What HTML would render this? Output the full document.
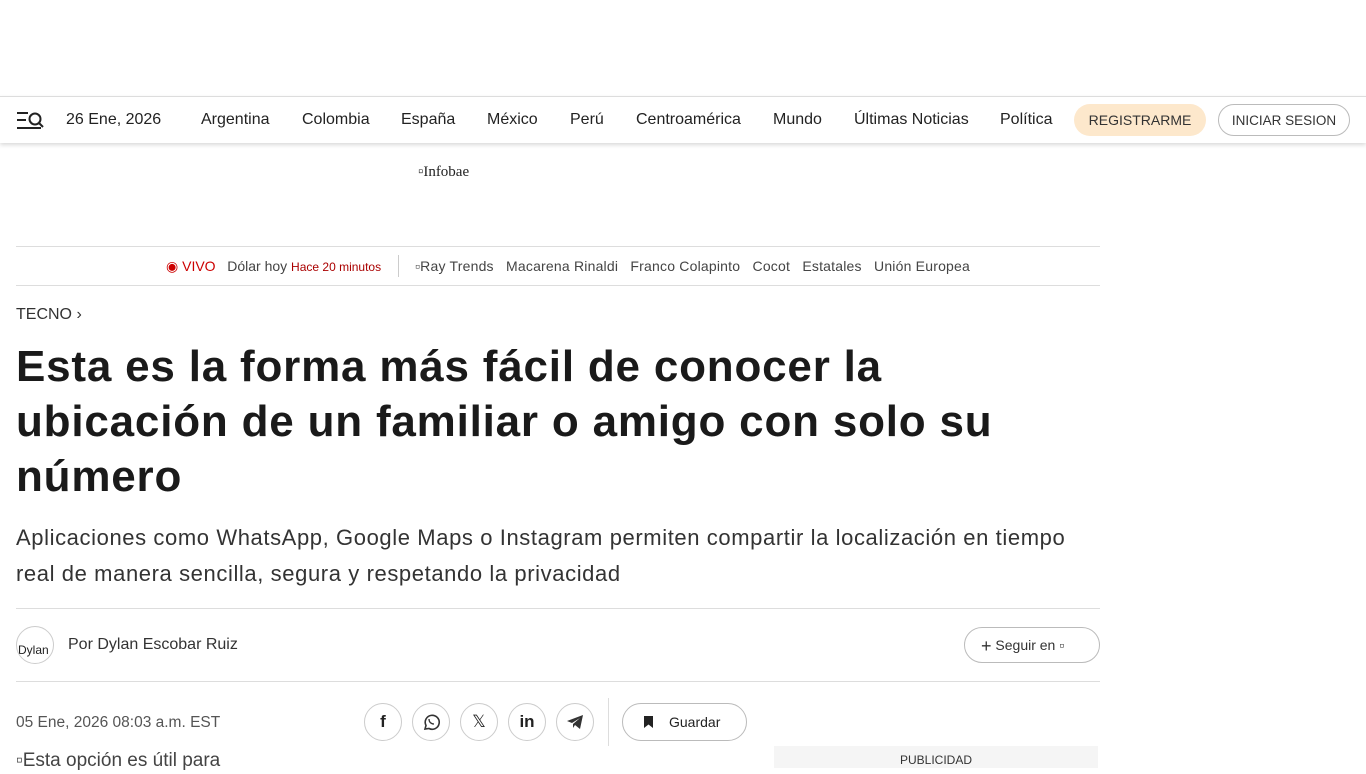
<!DOCTYPE html>
<html><head><meta charset="utf-8"><style>
*{margin:0;padding:0;box-sizing:border-box}
body{width:1366px;height:768px;overflow:hidden;background:#fff;font-family:"Liberation Sans",sans-serif;color:#222;position:relative}
.a{position:absolute;white-space:nowrap}
.nav{position:absolute;top:96px;left:0;width:1366px;height:47px;border-top:1px solid #ddd;box-shadow:0 2px 4px rgba(0,0,0,.15)}
.nav span{position:absolute;top:14px;font-size:16px;color:#222}
.btn{position:absolute;top:7px;height:32px;border-radius:16px;font-size:14px;line-height:32px;text-align:center;color:#333}
.hr{position:absolute;left:16px;width:1084px;height:1px;background:#ddd}
.circ{position:absolute;top:703px;width:38px;height:38px;border:1px solid #ccc;border-radius:50%;display:flex;align-items:center;justify-content:center}
</style></head><body>
<div class="nav">
<svg class="a" style="left:16px;top:14px" width="28" height="20" viewBox="0 0 28 20" fill="none" stroke="#222" stroke-width="2"><path d="M1 2h11M1 9h9M1 17h24"/><circle cx="19" cy="8" r="5.5"/><path d="M23 12l4 4"/></svg>
<span style="left:66px">26 Ene, 2026</span>
<span style="left:201px">Argentina</span><span style="left:302px">Colombia</span><span style="left:401px">España</span><span style="left:487px">México</span><span style="left:570px">Perú</span><span style="left:636px">Centroamérica</span><span style="left:773px">Mundo</span><span style="left:854px">Últimas Noticias</span><span style="left:1000px">Política</span>
<div class="btn" style="left:1074px;width:132px;background:#fde8cc">REGISTRARME</div>
<div class="btn" style="left:1218px;width:132px;border:1px solid #bbb;font-size:13.5px">INICIAR SESION</div>
</div>
<div class="a" style="left:418px;top:164px;font-family:'Liberation Serif',serif;font-size:15px">▫Infobae</div>
<div class="hr" style="top:246px"></div>
<div class="a" style="top:258px;left:166px;font-size:14px;color:#444"><span style="color:#c00">◉ VIVO</span>&nbsp;&nbsp; Dólar hoy <span style="color:#a00;font-size:12px">Hace 20 minutos</span></div>
<div class="a" style="left:398px;top:255px;width:1px;height:22px;background:#ccc"></div>
<div class="a" style="top:258px;left:415px;font-size:14px;color:#444;letter-spacing:0.2px">▫Ray Trends &nbsp; Macarena Rinaldi &nbsp; Franco Colapinto &nbsp; Cocot &nbsp; Estatales &nbsp; Unión Europea</div>
<div class="hr" style="top:285px"></div>
<div class="a" style="left:16px;top:306px;font-size:16px;color:#333">TECNO ›</div>
<div class="a" style="left:16px;top:339px;font-size:44px;font-weight:bold;line-height:55px;color:#1a1a1a;white-space:normal;width:1010px;letter-spacing:0.8px">Esta es la forma más fácil de conocer la ubicación de un familiar o amigo con solo su número</div>
<div class="a" style="left:16px;top:520px;font-size:22px;line-height:36px;color:#333;white-space:normal;width:1086px;letter-spacing:0.6px">Aplicaciones como WhatsApp, Google Maps o Instagram permiten compartir la localización en tiempo real de manera sencilla, segura y respetando la privacidad</div>
<div class="hr" style="top:608px"></div>
<div class="a" style="left:16px;top:626px;width:38px;height:38px;border:1px solid #ccc;border-radius:50%;font-size:12px;overflow:hidden;padding:16px 0 0 1px">Dylan</div>
<div class="a" style="left:68px;top:636px;font-size:16px;color:#333">Por Dylan Escobar Ruiz</div>
<div class="a" style="left:964px;top:627px;width:136px;height:36px;border:1px solid #bbb;border-radius:18px;font-size:14px;line-height:34px;padding-left:16px;color:#333"><span style="font-size:18px;vertical-align:-2px">+</span> Seguir en ▫</div>
<div class="hr" style="top:681px"></div>
<div class="a" style="left:16px;top:714px;font-size:15.5px;color:#555">05 Ene, 2026 08:03 a.m. EST</div>
<div class="circ" style="left:364px;font-weight:bold;font-size:17px">f</div>
<div class="circ" style="left:412px"><svg width="18" height="18" viewBox="0 0 18 18" fill="none" stroke="#333" stroke-width="1.6"><path d="M3 16l1-3.5A7 7 0 1 1 7 15.5z"/><path d="M7 6c0 3 2 5 5 5" stroke-width="1.3"/></svg></div>
<div class="circ" style="left:460px;font-size:17px">𝕏</div>
<div class="circ" style="left:508px;font-weight:bold;font-size:17px">in</div>
<div class="circ" style="left:556px"><svg width="18" height="18" viewBox="0 0 18 18" fill="#333"><path d="M1 8l16-6-3 14-5-4-2 3v-4l7-6-8 5z"/></svg></div>
<div class="a" style="left:608px;top:698px;width:1px;height:48px;background:#ddd"></div>
<div class="a" style="left:622px;top:703px;width:125px;height:38px;border:1px solid #bbb;border-radius:19px;font-size:14px;line-height:36px;padding-left:21px;color:#222"><svg width="9" height="12" viewBox="0 0 9 12" style="margin-right:16px;vertical-align:-1px"><path d="M0 0h9v12l-4.5-3.5L0 12z" fill="#222"/></svg>Guardar</div>
<div class="a" style="left:774px;top:746px;width:324px;height:22px;background:#f5f5f5;font-size:12px;text-align:center;line-height:28px;color:#333">PUBLICIDAD</div>
<div class="a" style="left:16px;top:750px;font-size:19px;color:#444">▫Esta opción es útil para</div>
</body></html>
